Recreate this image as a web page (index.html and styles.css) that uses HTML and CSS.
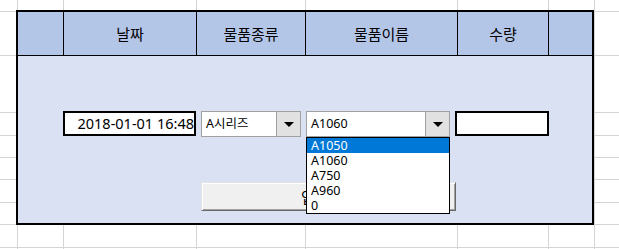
FILE: index.html
```html
<!DOCTYPE html>
<html lang="ko">
<head>
    <meta charset="UTF-8">
    <meta name="viewport" content="width=device-width, initial-scale=1.0">
    <title>입고 입력</title>
    <link rel="stylesheet" href="styles.css">
</head>
<body>
    <div class="sheet">
        <!-- empty worksheet cells around the form -->
        <div class="cell"></div><div class="cell"></div><div class="cell"></div><div class="cell"></div>
        <div class="cell"></div><div class="cell"></div><div class="cell"></div><div class="cell"></div>
        <div class="cell"></div><div class="cell"></div><div class="cell"></div><div class="cell"></div>
        <div class="cell"></div><div class="cell"></div><div class="cell"></div><div class="cell"></div>
        <div class="cell"></div><div class="cell"></div><div class="cell"></div><div class="cell"></div>
        <div class="cell"></div><div class="cell"></div><div class="cell"></div><div class="cell"></div>
        <div class="cell"></div><div class="cell"></div><div class="cell"></div><div class="cell"></div>
        <div class="cell"></div><div class="cell"></div><div class="cell"></div><div class="cell"></div>
        <div class="cell"></div><div class="cell"></div><div class="cell"></div><div class="cell"></div>
        <div class="cell"></div><div class="cell"></div>

        <div class="panel">
            <div class="panel-head">
                <div class="head-cell"></div>
                <div class="head-cell">날짜</div>
                <div class="head-cell">물품종류</div>
                <div class="head-cell">물품이름</div>
                <div class="head-cell">수량</div>
                <div class="head-cell"></div>
            </div>
            <div class="panel-body">
                <div class="fields">
                    <div class="field date">2018-01-01 16:48</div>
                    <div class="combo kind">
                        <span class="combo-value">A시리즈</span>
                        <span class="combo-btn"></span>
                    </div>
                    <div class="combo name">
                        <span class="combo-value">A1060</span>
                        <span class="combo-btn"></span>
                        <ul class="combo-list">
                            <li class="selected">A1050</li>
                            <li>A1060</li>
                            <li>A750</li>
                            <li>A960</li>
                            <li>0</li>
                        </ul>
                    </div>
                    <div class="field qty"></div>
                </div>
                <button class="submit">입력하기</button>
            </div>
        </div>
    </div>
</body>
</html>
```

FILE: styles.css
```css
html, body {
    margin: 0;
    padding: 0;
}
body {
    background: #fff;
    font-family: "Noto Sans", "Noto Sans CJK KR", sans-serif;
    color: #000;
}
.sheet {
    display: grid;
    grid-template-columns: 17px 45px 132px 108px 151px 90px 45px 1fr;
    grid-template-rows: 11px 43px 56px 22px 21px 21px 22px 21px 22px 1fr;
    gap: 1px;
    width: 619px;
    height: 249px;
    background: #d4d4d4;
    overflow: hidden;
}
.cell {
    background: #fff;
}
.panel {
    grid-column: 2 / 8;
    grid-row: 2 / 9;
    margin: -2px 0 -1px -2px;
    border: 2px solid #000;
    display: flex;
    flex-direction: column;
    position: relative;
}
.panel-head {
    display: grid;
    grid-template-columns: 46px 133px 109px 152px 91px 1fr;
    height: 44px;
    box-sizing: border-box;
    border-bottom: 1px solid #000;
    background: #b4c6e7;
}
.head-cell {
    display: flex;
    align-items: center;
    justify-content: center;
    border-right: 1px solid #000;
    font-family: "Noto Sans CJK KR", sans-serif;
    font-size: 15px;
}
.head-cell:last-child {
    border-right: none;
}
.panel-body {
    flex: 1;
    background: #d9e1f2;
    padding: 55px 0 0 45px;
}
.fields {
    display: flex;
    align-items: flex-start;
    gap: 5px;
}
.field {
    box-sizing: border-box;
    height: 25px;
    border: 2px solid #000;
    background: #fff;
}
.date {
    width: 133px;
    font-size: 14.5px;
    line-height: 21px;
    text-align: right;
    white-space: nowrap;
    overflow: hidden;
}
.qty {
    width: 94px;
}
.combo {
    box-sizing: border-box;
    height: 26px;
    border: 1px solid #a0a0a0;
    background: #fff;
    display: flex;
    position: relative;
}
.kind { width: 100px; }
.name { width: 144px; }
.combo-value {
    flex: 1;
    padding-left: 4px;
    font-size: 12.5px;
    line-height: 24px;
    white-space: nowrap;
}
.combo-btn {
    width: 24px;
    box-sizing: border-box;
    border-left: 1px solid #a0a0a0;
    background: #e1e1e1;
    display: flex;
    align-items: center;
    justify-content: center;
}
.combo-btn::after {
    content: "";
    border-left: 5px solid transparent;
    border-right: 5px solid transparent;
    border-top: 5px solid #000;
}
.combo-list {
    position: absolute;
    top: 25px;
    left: -1px;
    right: -1px;
    z-index: 1;
    margin: 0;
    padding: 0;
    list-style: none;
    border: 1px solid #000;
    background: #fff;
}
.combo-list li {
    height: 15px;
    line-height: 15px;
    padding-left: 4px;
    font-size: 12.5px;
}
.combo-list .selected {
    background: #0078d7;
    color: #fff;
}
.submit {
    display: block;
    margin: 45px 0 0 138px;
    width: 255px;
    height: 29px;
    padding: 0;
    background: #f0f0f0;
    border: 1px solid;
    border-color: #e3e3e3 #696969 #696969 #e3e3e3;
    box-shadow: inset 1px 1px #fff, inset -1px -1px #a0a0a0;
    font-family: "Noto Sans CJK KR", sans-serif;
    font-size: 15px;
    color: #000;
}
```
